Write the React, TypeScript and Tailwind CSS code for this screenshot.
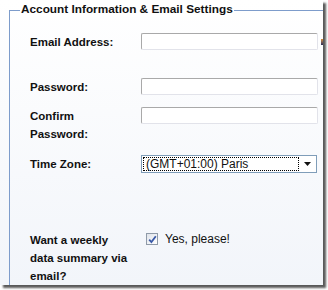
import React from "react";

const labelCls =
  "w-[111px] shrink-0 text-[11.5px] font-bold leading-[18px] text-[#111]";
const inputCls =
  "h-[17px] w-[177px] rounded-[2px] border border-[#a9a9a9] border-r-[#e2e3ea] border-b-[#e2e3ea] bg-white";

export default function App() {
  return (
    <div
      className="h-[290px] w-[328px] bg-white"
      style={{ fontFamily: '"Liberation Sans", Arial, sans-serif' }}
    >
      <div className="relative h-[285px] w-[323px] overflow-hidden bg-linear-to-b from-white to-[#f2f5fa] shadow-[3px_3px_2px_rgba(0,0,0,0.65)]">
        <div className="ml-[9px] mt-[10px] h-[280px] border-l border-t border-[#7d9ccb] pl-[20px]">
          <div className="absolute left-[20px] top-[2px] bg-white px-[1px] text-[11.8px] font-bold leading-[15px] text-[#111]">
            Account Information &amp; Email Settings
          </div>

          <div className="mt-[22px] flex h-[17px] items-center">
            <div className={labelCls}>Email Address:</div>
            <div className={inputCls} />
          </div>

          <div className="mt-[28px] flex h-[17px] items-center">
            <div className={labelCls}>Password:</div>
            <div className={inputCls} />
          </div>

          <div className="mt-[12px] flex items-start">
            <div className={labelCls}>
              Confirm
              <br />
              Password:
            </div>
            <div className={inputCls} />
          </div>

          <div className="mt-[12px] flex h-[18px] items-center">
            <div className={labelCls}>Time Zone:</div>
            <div className="flex h-[18px] w-[176px] items-center border border-[#7f9db9] bg-white">
              <div className="ml-[1px] flex h-[14px] w-[156px] items-center border border-dotted border-black pl-[2px] text-[12px] leading-[14px] text-[#111]">
                (GMT+01:00) Paris
              </div>
              <div className="flex flex-1 items-center justify-center">
                <svg width="8" height="5" viewBox="0 0 8 5">
                  <path d="M0 0h7l-3.5 4z" fill="#111" />
                </svg>
              </div>
            </div>
          </div>

          <div className="mt-[58px] flex items-start">
            <div className={labelCls}>
              Want a weekly
              <br />
              data summary via
              <br />
              email?
            </div>
            <div className="ml-[5px] mt-[1px] flex items-center">
              <div className="flex h-[12px] w-[12px] items-center justify-center border border-[#8f9aa8] bg-linear-to-br from-[#dfe3ea] to-white">
                <svg width="9" height="9" viewBox="0 0 9 9">
                  <path
                    d="M1.2 4.6 L3.4 7 L7.8 1.2"
                    fill="none"
                    stroke="#3a5aa8"
                    strokeWidth="1.8"
                  />
                </svg>
              </div>
              <span className="ml-[7px] text-[12px] leading-[14px] text-[#111]">
                Yes, please!
              </span>
            </div>
          </div>
        </div>
        <span className="absolute left-[321px] top-[39px] h-[6px] w-[2px] bg-linear-to-b from-[#e0902a] to-[#2a2a55]" />
      </div>
    </div>
  );
}
